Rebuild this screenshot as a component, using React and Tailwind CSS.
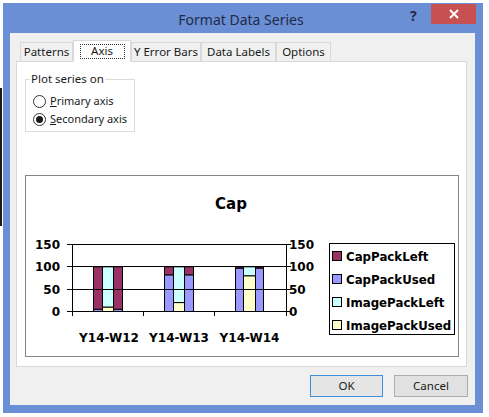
import React from "react";

const UI = { fontFamily: '"Segoe UI", "Noto Sans", "Open Sans", sans-serif' };
const CH = '"DejaVu Sans", Verdana, sans-serif';

const Y = (v) => 311 - v * 0.447;

// [x, width, segments [from, to, color]]
const BARS = [
  [93, 9, [[0, 5, "#9999ff"], [5, 100, "#993366"]]],
  [102, 11, [[0, 10, "#ffffcc"], [10, 100, "#ccffff"]]],
  [113, 9, [[0, 5, "#9999ff"], [5, 100, "#993366"]]],
  [164, 9, [[0, 82, "#9999ff"], [82, 100, "#993366"]]],
  [173, 11, [[0, 20, "#ffffcc"], [20, 100, "#ccffff"]]],
  [184, 9, [[0, 82, "#9999ff"], [82, 100, "#993366"]]],
  [235, 8, [[0, 97, "#9999ff"], [97, 100, "#993366"]]],
  [243, 12, [[0, 80, "#ffffcc"], [80, 100, "#ccffff"]]],
  [255, 8, [[0, 97, "#9999ff"], [97, 100, "#993366"]]],
];

const LEGEND = [
  ["CapPackLeft", "#993366"],
  ["CapPackUsed", "#9999ff"],
  ["ImagePackLeft", "#ccffff"],
  ["ImagePackUsed", "#ffffcc"],
];

function Chart() {
  const ticks = [0, 50, 100, 150];
  return (
    <svg width="432" height="180" className="block">
      <g transform="translate(-26,-176)" fontFamily={CH} fontWeight="bold" fill="#000">
        <text x="231" y="209" textAnchor="middle" fontSize="15">Cap</text>
        {BARS.map(([x, w, segs], i) =>
          segs.map(([a, b, c], j) => (
            <rect key={i + "-" + j} x={x + 0.5} y={Y(b) + 0.5} width={w} height={Y(a) - Y(b)} fill={c} stroke="#000" strokeWidth="1" />
          ))
        )}
        {ticks.map((t) => (
          <g key={t}>
            <line x1="67" x2="291" y1={Math.round(Y(t)) + 0.5} y2={Math.round(Y(t)) + 0.5} stroke="#000" />
            <text x="60" y={Math.round(Y(t)) + 5} textAnchor="end" fontSize="12">{t}</text>
            <text x="289" y={Math.round(Y(t)) + 5} fontSize="12">{t}</text>
          </g>
        ))}
        <line x1="72.5" x2="72.5" y1="244" y2="316" stroke="#000" />
        <line x1="286.5" x2="286.5" y1="244" y2="316" stroke="#000" />
        <line x1="143.5" x2="143.5" y1="311" y2="316" stroke="#000" />
        <line x1="214.5" x2="214.5" y1="311" y2="316" stroke="#000" />
        {[["Y14-W12", 109], ["Y14-W13", 179], ["Y14-W14", 249.5]].map(([t, x]) => (
          <text key={t} x={x} y="342" textAnchor="middle" fontSize="12">{t}</text>
        ))}
        <rect x="329.5" y="243.5" width="125" height="91" fill="#fff" stroke="#000" />
        {LEGEND.map(([t, c], i) => (
          <g key={t}>
            <rect x="332.5" y={251.5 + i * 23} width="9" height="9" fill={c} stroke="#000" />
            <text x="346" y={261 + i * 23} fontSize="11.8">{t}</text>
          </g>
        ))}
      </g>
    </svg>
  );
}

function Radio({ checked, u, rest }) {
  return (
    <div className="flex items-center h-[18px] whitespace-nowrap">
      <span className="shrink-0 w-[13px] h-[13px] rounded-full border border-[#333] bg-white flex items-center justify-center">
        {checked ? <span className="w-[7px] h-[7px] rounded-full bg-[#1a1a1a]" /> : null}
      </span>
      <span className="ml-[4px] text-[11px] text-[#1a1a1a]">
        <span className="underline">{u}</span>{rest}
      </span>
    </div>
  );
}

function Tab({ label, selected, w }) {
  if (selected) {
    return (
      <div className={`${w} h-[22px] -mb-px bg-white border border-[#d9d9d9] border-b-white flex items-center justify-center relative z-10`}>
        <span className="border border-dotted border-[#333] h-[15px] flex items-center w-[45px] justify-center">{label}</span>
      </div>
    );
  }
  return (
    <div className={`${w} h-[19px] mt-[2px] bg-[#f0f0f0] border border-[#d9d9d9] border-b-0 flex items-center justify-center whitespace-nowrap`}>
      {label}
    </div>
  );
}

export default function App() {
  return (
    <div className="w-[489px] h-[417px] bg-white relative overflow-hidden" style={UI}>
      <div className="absolute left-0 top-[88px] w-[2px] h-[138px] bg-[#1a1a1a]" />
      <div className="ml-[3px] mt-[3px] w-[480px] h-[410px] bg-[#6b8fd5] flex flex-col">
        <div className="h-[30px] flex items-start">
          <div className="flex-1 text-center text-[14px] text-[#1e2b47] pt-[6px] pl-[69px]">Format Data Series</div>
          <div className="w-[20px] text-[14px] font-bold text-[#1e2b47] pt-[2px]">?</div>
          <div className="mt-[1px] w-[45px] h-[20px] bg-[#c75050] flex items-center justify-center mr-[7px] ml-[1px]">
            <svg width="10" height="10" viewBox="0 0 10 10">
              <path d="M1 1 L9 9 M9 1 L1 9" stroke="#fff" strokeWidth="2" />
            </svg>
          </div>
        </div>
        <div className="ml-[7px] w-[465px] h-[372px] bg-[#f0f0f0] flex flex-col">
          <div className="ml-[6px] mt-[7px] w-[451px] flex items-end text-[11.5px] text-[#1a1a1a]">
            <div className="w-[4px]" />
            <Tab label="Patterns" w="w-[53px]" />
            <Tab label="Axis" selected w="w-[58px]" />
            <Tab label="Y Error Bars" w="w-[70px]" />
            <Tab label="Data Labels" w="w-[75px]" />
            <Tab label="Options" w="w-[55px]" />
          </div>
          <div className="ml-[6px] w-[451px] h-[306px] bg-white border border-[#d9d9d9] flex flex-col">
            <fieldset className="ml-[8px] mt-[10px] w-[110px] h-[60px] border border-[#dcdcdc] pl-[7px] pr-0 pb-[4px]">
              <legend className="px-[1px] -ml-[3px] text-[11.5px] text-[#1a1a1a] leading-[14px] whitespace-nowrap">Plot series on</legend>
              <div className="mt-[6px]">
                <Radio u="P" rest="rimary axis" />
                <Radio checked u="S" rest="econdary axis" />
              </div>
            </fieldset>
            <div className="ml-[8px] mt-[43px] w-[434px] h-[182px] border border-[#858585] bg-white">
              <Chart />
            </div>
          </div>
          <div className="mt-[8px] flex justify-end gap-[11px] pr-[7px] text-[11.5px] text-[#1a1a1a]">
            <div className="w-[73px] h-[22px] border border-[#3c8fd9] bg-[#e5e5e5] flex items-center justify-center">OK</div>
            <div className="w-[74px] h-[22px] border border-[#adadad] bg-[#e1e1e1] flex items-center justify-center">Cancel</div>
          </div>
        </div>
      </div>
    </div>
  );
}
